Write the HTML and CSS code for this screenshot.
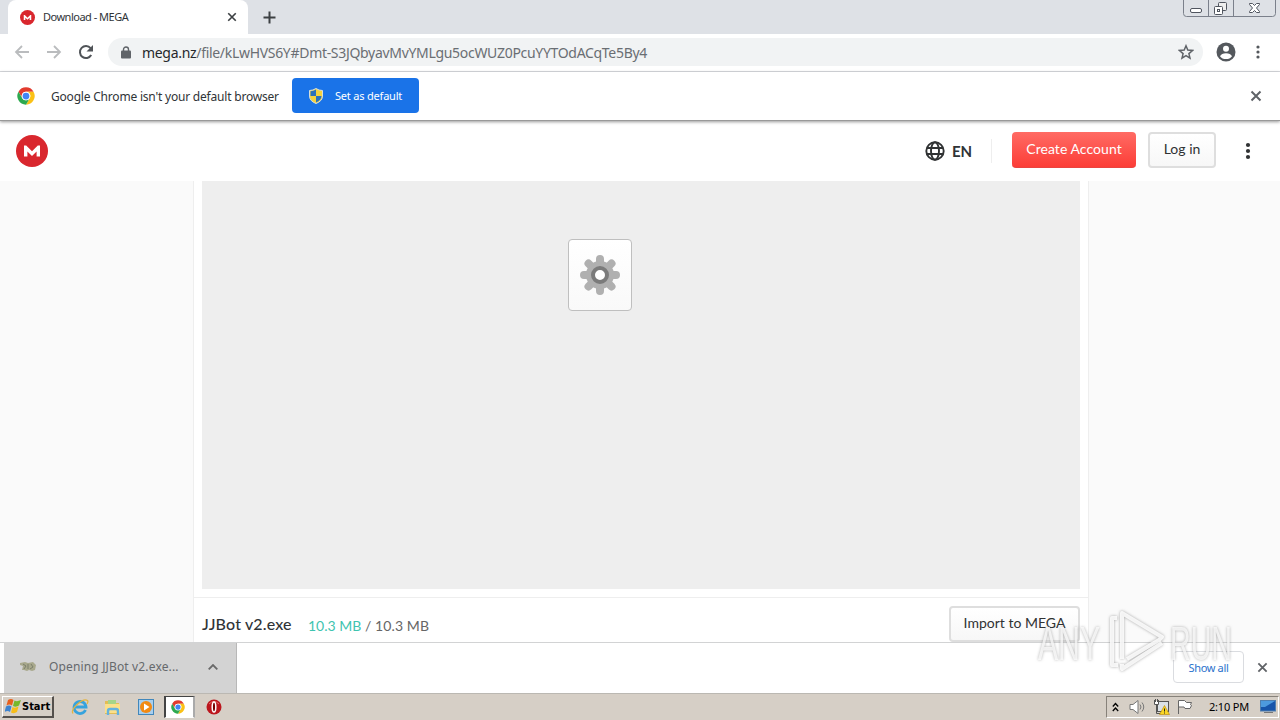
FILE: index.html
```html
<!DOCTYPE html>
<html lang="en">
  <head>
    <meta charset="UTF-8" />
    <title>Download - MEGA</title>
    <link rel="stylesheet" href="styles.css">
  </head>
  <body>
    <svg class="defs" width="0" height="0">
      <symbol id="chrome" viewBox="0 0 48 48">
        <circle cx="24" cy="24" r="23" fill="#fff" />
        <path d="M4 12.500A23 23 0 0 1 44 12.500H24A11.500 11.500 0 0 0 14 29.750Z" fill="#e23b2e" />
        <path d="M44 12.500A23 23 0 0 1 24 47L34 29.750A11.500 11.500 0 0 0 24 12.500Z" fill="#fbc116" />
        <path d="M24 47A23 23 0 0 1 4 12.500L14 29.750A11.500 11.500 0 0 0 34 29.750Z" fill="#2da94f" />
        <circle cx="24" cy="24" r="11.500" fill="#fff" />
        <circle cx="24" cy="24" r="9" fill="#4285f4" />
      </symbol>
      <symbol id="mega" viewBox="0 0 32 32">
        <circle cx="16" cy="16" r="16" fill="#d9272e" />
        <path d="M8 21.500V10.500h2.200l5.800 5.800 5.800-5.800H24v11h-3.400v-5L16 21l-4.600-4.500v5z" fill="#fff" />
      </symbol>
      <symbol id="cross" viewBox="0 0 12 12">
        <path d="M1.500 1.500l9 9M10.500 1.500l-9 9" fill="none" stroke="currentColor" stroke-width="2" />
      </symbol>
    </svg>

    <div class="tab-strip">
      <div class="tab">
        <svg width="15" height="15"><use href="#mega" /></svg>
        <span class="tab-title">Download - MEGA</span>
        <svg class="tab-close" width="10" height="10"><use href="#cross" /></svg>
      </div>
      <svg class="new-tab" width="13" height="13" viewBox="0 0 13 13"><path d="M6.500 .5v12M.5 6.500h12" stroke="#3c4043" stroke-width="2" /></svg>
      <div class="window-buttons">
        <svg width="93" height="17" viewBox="0 0 93 17" fill="none" stroke="#7b808b">
          <path d="M.5 0v13.500q0 3 3 3h86q3 0 3-3V0M25.500 0v16M50.500 0v16" />
          <rect x="7.500" y="8.500" width="11" height="4" rx="1.500" fill="#fff" stroke="#50555f" />
          <rect x="35.500" y="2.500" width="8" height="8" rx="1" fill="#eee" stroke="#50555f" />
          <rect x="31.500" y="6.500" width="8" height="8" rx="1" fill="#fff" stroke="#50555f" />
          <rect x="34.500" y="9.500" width="2" height="2" stroke="#50555f" />
          <path d="M66.500 3.500h3l2 2 2-2h3v1l-3 3.500 3 3.500v1h-3l-2-2-2 2h-3v-1l3-3.500-3-3.500z" fill="#fff" stroke="#50555f" />
        </svg>
      </div>
    </div>

    <div class="toolbar">
      <svg class="nav" width="16" height="16" viewBox="0 0 16 16"><path d="M15 8H2M8 2L2 8l6 6" fill="none" stroke="#babcbe" stroke-width="1.800" /></svg>
      <svg class="nav" width="16" height="16" viewBox="0 0 16 16"><path d="M1 8h13M8 2l6 6-6 6" fill="none" stroke="#babcbe" stroke-width="1.800" /></svg>
      <svg class="nav" width="16" height="16" viewBox="0 0 16 16"><path d="M13.200 11A6 6 0 1 1 12.600 4.200" fill="none" stroke="#505458" stroke-width="2" /><path d="M15 1v6.500H8.500z" fill="#505458" /></svg>
      <div class="address">
        <svg width="10" height="13" viewBox="0 0 10 13"><rect y="4.500" width="10" height="8" rx="1" fill="#5f6368" /><path d="M2.500 5V3.500a2.500 2.500 0 0 1 5 0V5" fill="none" stroke="#5f6368" stroke-width="1.400" /></svg>
        <span class="url"><b>mega.nz</b>/file/kLwHVS6Y#Dmt-S3JQbyavMvYMLgu5ocWUZ0PcuYYTOdACqTe5By4</span>
        <svg class="star" width="16" height="16" viewBox="0 0 16 16"><path d="M8 1.800l1.800 4.300 4.700.4-3.600 3.100 1.100 4.600-4-2.500-4 2.500 1.100-4.600L1.500 6.500l4.700-.4z" fill="none" stroke="#5f6368" stroke-width="1.500" /></svg>
      </div>
      <svg class="profile" width="20" height="20" viewBox="0 0 20 20"><circle cx="10" cy="10" r="9.500" fill="#54585d" /><circle cx="10" cy="6.800" r="3" fill="#fff" /><path d="M4 14.200q1.500-2.900 6-2.900t6 2.900q-2.100 2.900-6 2.900t-6-2.900z" fill="#fff" /></svg>
      <svg class="menu" width="4" height="14" viewBox="0 0 4 14" fill="#54585d"><circle cx="2" cy="2" r="1.600" /><circle cx="2" cy="7" r="1.600" /><circle cx="2" cy="12" r="1.600" /></svg>
    </div>

    <div class="infobar">
      <svg width="18" height="18"><use href="#chrome" /></svg>
      <span class="infobar-text">Google Chrome isn't your default browser</span>
      <button class="set-default">
        <svg width="14" height="16" viewBox="0 0 14 16">
          <path d="M7 .5Q10 2.500 13.500 2.500V8q0 5-6.500 7.500Q.5 13 .5 8V2.500Q4 2.500 7 .5z" fill="#f5d33d" stroke="#d7dfdb" />
          <path d="M7 8V14.500Q12.300 12 12.500 8zM7 1.500V8H1.500V3.300Q4.500 3.200 7 1.500z" fill="#2c72ba" />
        </svg>
        <span>Set as default</span>
      </button>
      <svg class="infobar-close" width="12" height="12"><use href="#cross" /></svg>
    </div>

    <header class="site-header">
      <svg width="32" height="32"><use href="#mega" /></svg>
      <div class="language">
        <svg width="20" height="20" viewBox="0 0 20 20" fill="none" stroke="#303233" stroke-width="1.900"><circle cx="10" cy="10" r="8.700" /><ellipse cx="10" cy="10" rx="4" ry="8.700" /><path d="M2 7h16M2 13h16" /></svg>
        <span>EN</span>
      </div>
      <button class="btn btn-red">Create Account</button>
      <button class="btn btn-light">Log in</button>
      <svg class="site-menu" width="6" height="18" viewBox="0 0 6 18" fill="#303233"><circle cx="3" cy="3" r="2.100" /><circle cx="3" cy="9" r="2.100" /><circle cx="3" cy="15" r="2.100" /></svg>
    </header>

    <main class="page">
      <div class="download">
        <div class="preview">
          <div class="file-icon">
            <svg width="40" height="40" viewBox="-20 -20 40 40">
              <g stroke="#b0b0b0" stroke-width="8" stroke-linecap="round">
                <path d="M0-16V16M-16 0H16M-11.500-11.500L11.500 11.500M11.500-11.500L-11.500 11.500" />
              </g>
              <circle r="14" fill="#b0b0b0" />
              <circle r="7" fill="#fff" stroke="#7b7b7b" stroke-width="4" />
            </svg>
          </div>
        </div>
        <div class="file-row">
          <span class="file-name">JJBot v2.exe</span>
          <span class="file-size"><span class="done">10.3 MB</span> / 10.3 MB</span>
          <button class="btn btn-light import">Import to MEGA</button>
        </div>
      </div>
    </main>

    <div class="shelf">
      <div class="shelf-item">
        <svg width="16" height="14" viewBox="0 0 16 14"><path d="M0 3l5-1 3 1 5-1 3 3-1 5-3 1-3-1-2 1-3-1H2l1-4-3-1z" fill="#a8a88c" /><path d="M3 4l3 2-2 3M8 4v5M11 4l2 3-3 2" fill="none" stroke="#7c806c" /></svg>
        <span class="shelf-name">Opening JJBot v2.exe...</span>
        <svg class="chevron" width="10" height="6" viewBox="0 0 10 6"><path d="M.7 5.300L5 1l4.300 4.300" fill="none" stroke="#696969" stroke-width="1.800" /></svg>
      </div>
      <button class="show-all">Show all</button>
      <svg class="shelf-close" width="11" height="11"><use href="#cross" /></svg>
    </div>

    <div class="taskbar">
      <div class="start">
        <svg width="17" height="16" viewBox="0 0 17 16">
          <path d="M3 2q3-2 5.500 0L7 7.500Q4.500 5.500 1.500 7.500z" fill="#e8601c" />
          <path d="M9.500 2.500Q12 4 16 2l-2 5.500Q11 9.500 8 8z" fill="#76b82a" />
          <path d="M1 8.500q3-2 5.500 0L5 14Q2.500 12-.5 14z" fill="#3d83cf" />
          <path d="M7.500 9Q10 10.500 13.500 8.500L12 14q-3 2-6 .5z" fill="#f7bd18" />
        </svg>
        <span>Start</span>
      </div>
      <div class="quick-launch">
        <svg width="18" height="18" viewBox="0 0 18 18"><path d="M14.500 12A6 6 0 1 1 15 9H4" fill="none" stroke="#36a3dd" stroke-width="2.800" /><path d="M2 15.500C-1 11 12-.5 16.500 2.500q1 1-.5 3.500" fill="none" stroke="#e2b442" stroke-width="1.300" /></svg>
        <svg width="18" height="18" viewBox="0 0 18 18"><path d="M1 3h5l1 2h8v11H1z" fill="#e3bd55" /><path d="M4 2h8v5H4z" fill="#a5d589" /><path d="M1 6h15v9H1z" fill="#fbe08a" /><path d="M4 17v-4q0-2 2-2h6q2 0 2 2v4" fill="none" stroke="#63b2df" stroke-width="2.400" /></svg>
        <svg width="18" height="18" viewBox="0 0 18 18"><rect x="1.500" y="1.500" width="15" height="15" fill="#a8cfee" stroke="#4187bb" /><circle cx="9" cy="9" r="6" fill="#f28a13" /><path d="M7 5.500L12.500 9 7 12.500z" fill="#fff" /></svg>
        <div class="task-active"><svg width="14" height="14"><use href="#chrome" /></svg></div>
        <svg width="16" height="16" viewBox="0 0 16 16"><circle cx="8" cy="8" r="7.500" fill="#bc161d" /><path d="M3 5q5-5 10 0" fill="none" stroke="#e66b68" /><ellipse cx="8" cy="8" rx="1.800" ry="5" fill="#700" stroke="#fff" stroke-width="1.500" /></svg>
      </div>
      <div class="tray">
        <svg width="7" height="10" viewBox="0 0 7 10"><path d="M.8 4.500l2.700-3 2.700 3M.8 9l2.700-3 2.700 3" fill="none" stroke="#000" stroke-width="1.300" /></svg>
        <svg class="tray-sound" width="17" height="16" viewBox="0 0 17 16"><path d="M1 5.500h3l5-4v13l-5-4H1z" fill="#fff" stroke="#777" /><path d="M11 5.500q2 2.500 0 5M13 3.500q3.500 4.500 0 9" fill="none" stroke="#777" /></svg>
        <svg class="tray-net" width="17" height="16" viewBox="0 0 17 16"><rect x="4.500" y="2.500" width="11" height="10" fill="#dce2e8" stroke="#555" /><path d="M1 2h5v4H1z" fill="#fff" /><path d="M1.500 1v4.500h4V1M3.500 5.500v9h5M2.500 0v3M4.500 0v3" fill="none" stroke="#555" /><path d="M11.500 6.500l5 9h-10z" fill="#fbd724" stroke="#bb8500" stroke-width=".6" /><path d="M11.500 9.500v3M11.500 13.500v1" stroke="#222" /></svg>
        <svg class="tray-flag" width="16" height="16" viewBox="0 0 16 16"><path d="M1.500 15V1.500h6l2 2h5q-2 3 0 3L13 9.500H8l-1-1.500H2" fill="#fff" stroke="#666" /></svg>
        <span class="clock">2:10 PM</span>
        <svg width="16" height="14" viewBox="0 0 16 14"><rect x=".5" y=".5" width="15" height="10.500" fill="#1755aa" stroke="#507fae" /><path d="M1 1h14L5 7H1z" fill="#4d9ade" /><path d="M4 12.500h9" stroke="#777" /></svg>
      </div>
    </div>

    <svg class="watermark" width="205" height="72" viewBox="0 0 205 72">
      <text x="3" y="55" textLength="62" lengthAdjust="spacingAndGlyphs">ANY</text>
      <text x="135" y="55" textLength="62" lengthAdjust="spacingAndGlyphs">RUN</text>
      <path d="M82 13h-5v47h6M87 54V8l40 24-3 3-32 19M127 38L87 64v-5" />
    </svg>
  </body>
</html>
```

FILE: styles.css
```css
* {
  box-sizing: border-box;
}
body {
  margin: 0;
  width: 1280px;
  height: 720px;
  overflow: hidden;
  position: relative;
  display: flex;
  flex-direction: column;
  background: #fff;
  font-family: "Noto Sans", sans-serif;
  color: #303437;
  white-space: nowrap;
}
svg {
  display: block;
  flex-shrink: 0;
}
.defs {
  position: absolute;
}
button {
  font-family: inherit;
  padding: 0;
  white-space: nowrap;
}

/* browser */
.tab-strip {
  height: 34px;
  flex-shrink: 0;
  display: flex;
  align-items: center;
  background: #dee1e6;
  padding-left: 8px;
}
.tab {
  width: 240px;
  height: 34px;
  display: flex;
  align-items: center;
  padding: 0 11px 0 12px;
  background: #fff;
  border-radius: 8px 8px 0 0;
}
.tab-title {
  margin-left: 8px;
  padding-bottom: 2px;
  font-size: 11px;
  letter-spacing: -0.5px;
}
.tab-close {
  margin-left: auto;
  color: #3c4043;
}
.new-tab {
  margin-left: 15px;
}
.window-buttons {
  margin-left: auto;
  margin-right: 4px;
  align-self: flex-start;
}
.toolbar {
  height: 38px;
  flex-shrink: 0;
  display: flex;
  align-items: center;
  padding: 0 20px 1px 14px;
  border-bottom: 1px solid #dadce0;
}
.nav {
  margin-right: 16px;
}
.address {
  width: 1095px;
  height: 28px;
  margin-left: -2px;
  padding: 0 9px 0 13px;
  display: flex;
  align-items: center;
  background: #f1f3f4;
  border-radius: 14px;
}
.url {
  margin-left: 11px;
  font-size: 14px;
  letter-spacing: -0.31px;
  color: #6a6e73;
}
.url b {
  font-weight: 400;
  color: #25282c;
}
.star {
  margin-left: auto;
}
.profile {
  margin-left: 13px;
}
.menu {
  margin-left: auto;
}
.infobar {
  height: 49px;
  flex-shrink: 0;
  display: flex;
  align-items: center;
  padding: 0 18px 0 17px;
  border-bottom: 1px solid #999;
  box-shadow: 0 1px 3px rgba(0, 0, 0, 0.4);
  position: relative;
}
.infobar-text {
  width: 241px;
  margin-left: 16px;
  font-size: 12px;
  letter-spacing: -0.2px;
}
.set-default {
  width: 127px;
  height: 35px;
  margin-bottom: 1px;
  display: flex;
  align-items: center;
  padding-left: 17px;
  gap: 12px;
  border: 0;
  border-radius: 4px;
  background: #1a73e8;
  color: #fff;
  font-size: 11px;
  letter-spacing: -0.2px;
}
.set-default span {
  padding-bottom: 1px;
}
.infobar-close {
  margin-left: auto;
  color: #5f6368;
}

/* site */
.site-header {
  height: 60px;
  flex-shrink: 0;
  display: flex;
  align-items: center;
  padding: 0 29px 0 16px;
  font-family: Lato, sans-serif;
}
.language {
  height: 24px;
  width: 67px;
  margin-left: auto;
  margin-right: 20px;
  display: flex;
  align-items: center;
  gap: 7px;
  border-right: 1px solid #eee;
  font-size: 15px;
  font-weight: 700;
}
.language span {
  padding-bottom: 1px;
}
.btn {
  height: 36px;
  border-radius: 4px;
  font-family: Lato, sans-serif;
  font-size: 14px;
  margin-bottom: 2px;
  padding-bottom: 3px;
}
.btn-red {
  width: 124px;
  margin-right: 12px;
  border: 0;
  background: linear-gradient(#ff6b64, #fc3d37);
  border-bottom: 1px solid #e94440;
  color: #fff;
  letter-spacing: 0.05px;
}
.btn-light {
  width: 68px;
  border: 2px solid #dedede;
  background: linear-gradient(#fff, #f7f7f7);
  color: #303233;
}
.site-menu {
  margin-left: 29px;
}
.page {
  height: 461px;
  flex-shrink: 0;
  overflow: hidden;
  background: #fafafa;
  display: flex;
  justify-content: center;
}
.download {
  width: 896px;
  height: 470px;
  margin-left: 2px;
  background: #fff;
  border: 1px solid #eee;
  border-width: 0 1px;
}
.preview {
  height: 408px;
  margin: 0 8px;
  padding: 58px 0 0 366px;
  background: #eee;
}
.file-icon {
  width: 64px;
  height: 72px;
  display: flex;
  align-items: center;
  justify-content: center;
  background: linear-gradient(#fff, #f9f9f9);
  border: 1px solid #bfbfbf;
  border-radius: 4px;
}
.file-row {
  height: 54px;
  margin-top: 8px;
  padding: 0 8px;
  display: flex;
  align-items: center;
  border-top: 1px solid #eee;
  font-family: Lato, sans-serif;
}
.file-name {
  font-size: 16px;
  font-weight: 500;
  letter-spacing: 0.15px;
  width: 106px;
  padding-bottom: 3px;
}
.file-size {
  font-size: 14px;
  letter-spacing: 0.1px;
  color: #666;
  padding-top: 2px;
}
.done {
  color: #3fc4b0;
  letter-spacing: 0;
}
.import {
  width: 131px;
  margin: 0 0 1px auto;
}

/* downloads shelf */
.shelf {
  height: 51px;
  flex-shrink: 0;
  display: flex;
  align-items: center;
  padding: 0 12px 0 4px;
  border-top: 1px solid #d2d3d4;
}
.shelf-item {
  width: 233px;
  height: 50px;
  display: flex;
  align-items: center;
  padding: 0 18px 2px 16px;
  background: #d3d3d3;
  border-right: 1px solid #b8b8b8;
}
.shelf-name {
  margin-left: 13px;
  padding-bottom: 1px;
  font-size: 12px;
  letter-spacing: 0.15px;
  color: #66696c;
}
.chevron {
  margin-left: auto;
}
.show-all {
  width: 71px;
  height: 32px;
  margin-left: auto;
  margin-right: 13px;
  margin-bottom: 2px;
  border: 1px solid #dadce0;
  border-radius: 4px;
  background: #fff;
  color: #2b72cc;
  font-size: 11px;
  letter-spacing: -0.35px;
}
.shelf-close {
  margin-bottom: 2px;
  color: #606367;
}

/* taskbar */
.taskbar {
  height: 27px;
  flex-shrink: 0;
  display: flex;
  align-items: center;
  padding: 0 0 1px 2px;
  background: #d6cfc6;
  border-top: 1px solid #bbb8b2;
}
.start {
  width: 52px;
  height: 22px;
  display: flex;
  align-items: center;
  padding-left: 2px;
  border: 1px solid #fff;
  border-right: 2px solid #55514c;
  border-bottom: 2px solid #55514c;
  color: #000;
  font: bold 11px "DejaVu Sans Condensed", sans-serif;
}
.quick-launch {
  display: flex;
  align-items: center;
  margin-left: 17px;
}
.quick-launch > svg {
  margin-right: 15px;
}
.quick-launch > svg:nth-child(3) {
  margin-right: 9px;
}
.task-active {
  width: 31px;
  height: 22px;
  margin-right: 11px;
  padding: 3px 0 0 5px;
  background: #fff;
  border: 1px solid #fff;
  border-top-color: #444;
  border-left: 2px solid #444;
  border-right: 2px solid #aaa;
}
.tray {
  width: 173px;
  height: 22px;
  margin-left: auto;
  margin-right: 1px;
  display: flex;
  align-items: center;
  padding: 0 2px 0 5px;
  border: 1px solid #fff;
  border-top-color: #87827a;
  border-left-color: #87827a;
}
.tray-sound {
  margin-left: 10px;
}
.tray-net {
  margin-left: 7px;
}
.tray-flag {
  margin-left: 7px;
}
.clock {
  margin-left: 16px;
  margin-right: auto;
  color: #000;
  font-size: 11px;
  letter-spacing: -0.2px;
}

.watermark {
  position: absolute;
  left: 1035px;
  top: 605px;
  filter: drop-shadow(0 0 1.5px rgba(90, 90, 90, 0.6));
}
.watermark text {
  font: 49px "Liberation Sans", sans-serif;
  fill: rgba(255, 255, 255, 0.75);
}
.watermark path {
  fill: none;
  stroke: rgba(255, 255, 255, 0.85);
  stroke-width: 4;
  stroke-linejoin: round;
}
```
